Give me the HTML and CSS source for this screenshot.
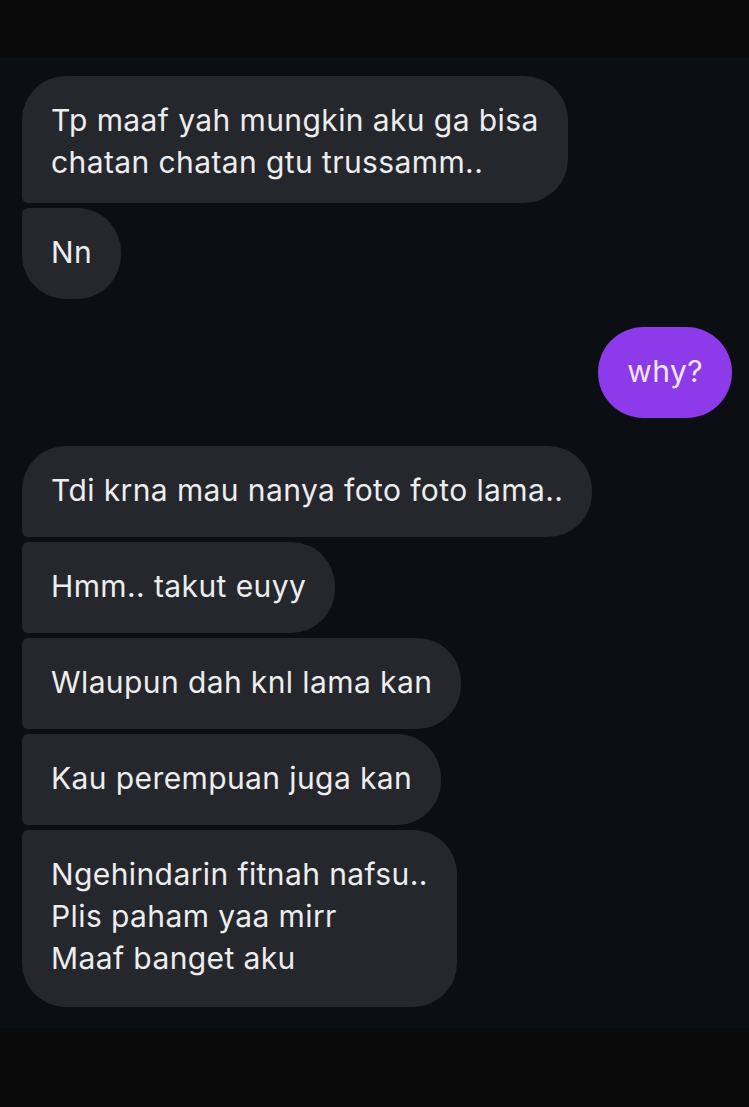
FILE: index.html
```html
<!DOCTYPE html>
<html lang="en">

<head>
    <meta charset="UTF-8">
    <meta name="viewport" content="width=device-width, initial-scale=1.0">
    <title>Chat</title>

    <link rel="stylesheet" href="styles.css">
</head>

<body>
    <div class="top-bar"></div>

    <div class="thread">
        <div class="group incoming">
            <div class="bubble first compact">Tp maaf yah mungkin aku ga bisa<br>chatan chatan gtu trussamm..</div>
            <div class="bubble last">Nn</div>
        </div>

        <div class="group outgoing">
            <div class="bubble">why?</div>
        </div>

        <div class="group incoming">
            <div class="bubble first">Tdi krna mau nanya foto foto lama..</div>
            <div class="bubble middle">Hmm.. takut euyy</div>
            <div class="bubble middle">Wlaupun dah knl lama kan</div>
            <div class="bubble middle">Kau perempuan juga kan</div>
            <div class="bubble last tall">Ngehindarin fitnah nafsu..<br>Plis paham yaa mirr<br>Maaf banget aku</div>
        </div>
    </div>

    <div class="bottom-bar"></div>
</body>

</html>
```

FILE: styles.css
```css
* {
    margin: 0;
    padding: 0;
    box-sizing: border-box;
}

body {
    min-height: 100vh;
    display: flex;
    flex-direction: column;
    background: #0a0a0b;
    font-family: Inter, "Noto Sans", sans-serif;
}

.top-bar {
    height: 57px;
    background: #0a0a0b;
}

.thread {
    height: 971px;
    display: flex;
    flex-direction: column;
    gap: 28px;
    padding: 19px 17px 21px 22px;
    background: #0b0f13;
}

.bottom-bar {
    flex: 1;
    background: #0a0a0b;
}

.group {
    display: flex;
    flex-direction: column;
    gap: 5px;
}

.incoming {
    align-items: flex-start;
}

.outgoing {
    align-items: flex-end;
}

.bubble {
    padding: 23px 29px 26px;
    font-size: 30px;
    line-height: 42px;
    letter-spacing: 0.4px;
    color: #ededee;
    background: #25272c;
    border-radius: 44px;
}

.bubble.compact {
    padding-bottom: 20px;
}

.bubble.tall {
    padding-bottom: 28px;
}

.incoming .first {
    border-bottom-left-radius: 6px;
}

.incoming .middle {
    border-top-left-radius: 6px;
    border-bottom-left-radius: 6px;
}

.incoming .last {
    border-top-left-radius: 6px;
}

.outgoing .bubble {
    background: #8c3aea;
    color: #f3e6ff;
    border-radius: 46px;
}
```
